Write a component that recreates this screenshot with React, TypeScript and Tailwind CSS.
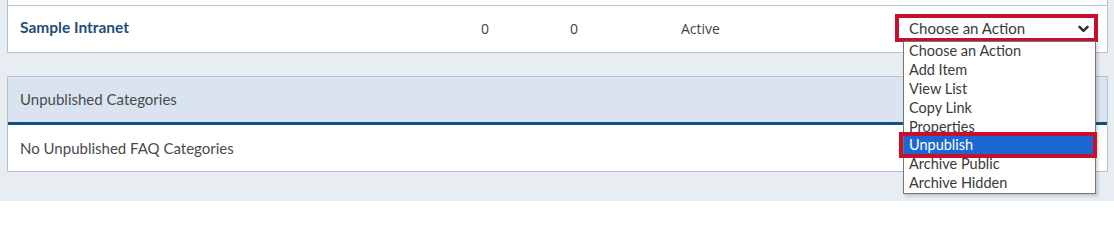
import React from 'react';

const items = [
  'Choose an Action',
  'Add Item',
  'View List',
  'Copy Link',
  'Properties',
  'Unpublish',
  'Archive Public',
  'Archive Hidden',
];

function ActionSelect() {
  return (
    <div className="relative w-[203px] h-[28px]">
      <div className="h-full border-[4px] border-[#c8102e] bg-white">
        <div className="h-full flex items-center justify-between pl-[10px] pr-[5px]">
          <span className="text-[15px] text-[#3a3a3a]">Choose an Action</span>
          <svg width="11" height="8" viewBox="0 0 11 8" className="mt-[1px]">
            <path d="M1.5 1.8 L5.5 5.8 L9.5 1.8" fill="none" stroke="#333" strokeWidth="2.6" strokeLinecap="round" strokeLinejoin="round" />
          </svg>
        </div>
      </div>
      {/* open option list */}
      <div className="absolute left-[8px] top-[27px] w-[193px] bg-white border border-[#767676] shadow-[2px_2px_3px_rgba(0,0,0,0.18)] z-10">
        {items.map((it) => (
          <div
            key={it}
            className={`h-[18.9px] leading-[18.9px] pl-[5px] text-[14.5px] ${
              it === 'Unpublish' ? 'bg-[#1b67d3] text-white' : 'text-[#3a3a3a]'
            }`}
          >
            {it}
          </div>
        ))}
        <div className="absolute left-[-5px] right-[-2px] top-[90px] h-[26px] border-[4px] border-[#c8102e] pointer-events-none" />
      </div>
    </div>
  );
}

export default function App() {
  return (
    <div className="w-[1114px] h-[201px] bg-[#e8edf2] pl-[7px] pr-[6px] font-['Lato','Noto_Sans',sans-serif] overflow-hidden">
      <div className="bg-white border-x border-b border-[#b7c1cf]">
        <div className="h-[6px] border-b border-[#b7c1cf]" />
        <div className="h-[46px] pb-[2px] flex items-center">
          <div className="w-[473px] pl-3 text-[15.5px] font-bold text-[#1f4e79]">Sample Intranet</div>
          <div className="w-[89px] text-[14px] text-[#444] font-['Open_Sans',sans-serif]">0</div>
          <div className="w-[111px] text-[14px] text-[#444] font-['Open_Sans',sans-serif]">0</div>
          <div className="w-[214px] text-[14px] text-[#444] font-['Open_Sans',sans-serif]">Active</div>
          <ActionSelect />
        </div>
      </div>

      <div className="mt-[23px] border border-[#b7c1cf] bg-white">
        <div className="h-[48px] bg-[#dae4f0] border-b-[3px] border-[#0e5185] flex items-center pl-3 text-[15px] text-[#4a4a4a]">
          Unpublished Categories
        </div>
        <div className="h-[46px] flex items-center pl-3 text-[15px] text-[#4a4a4a]">
          No Unpublished FAQ Categories
        </div>
      </div>
    </div>
  );
}
